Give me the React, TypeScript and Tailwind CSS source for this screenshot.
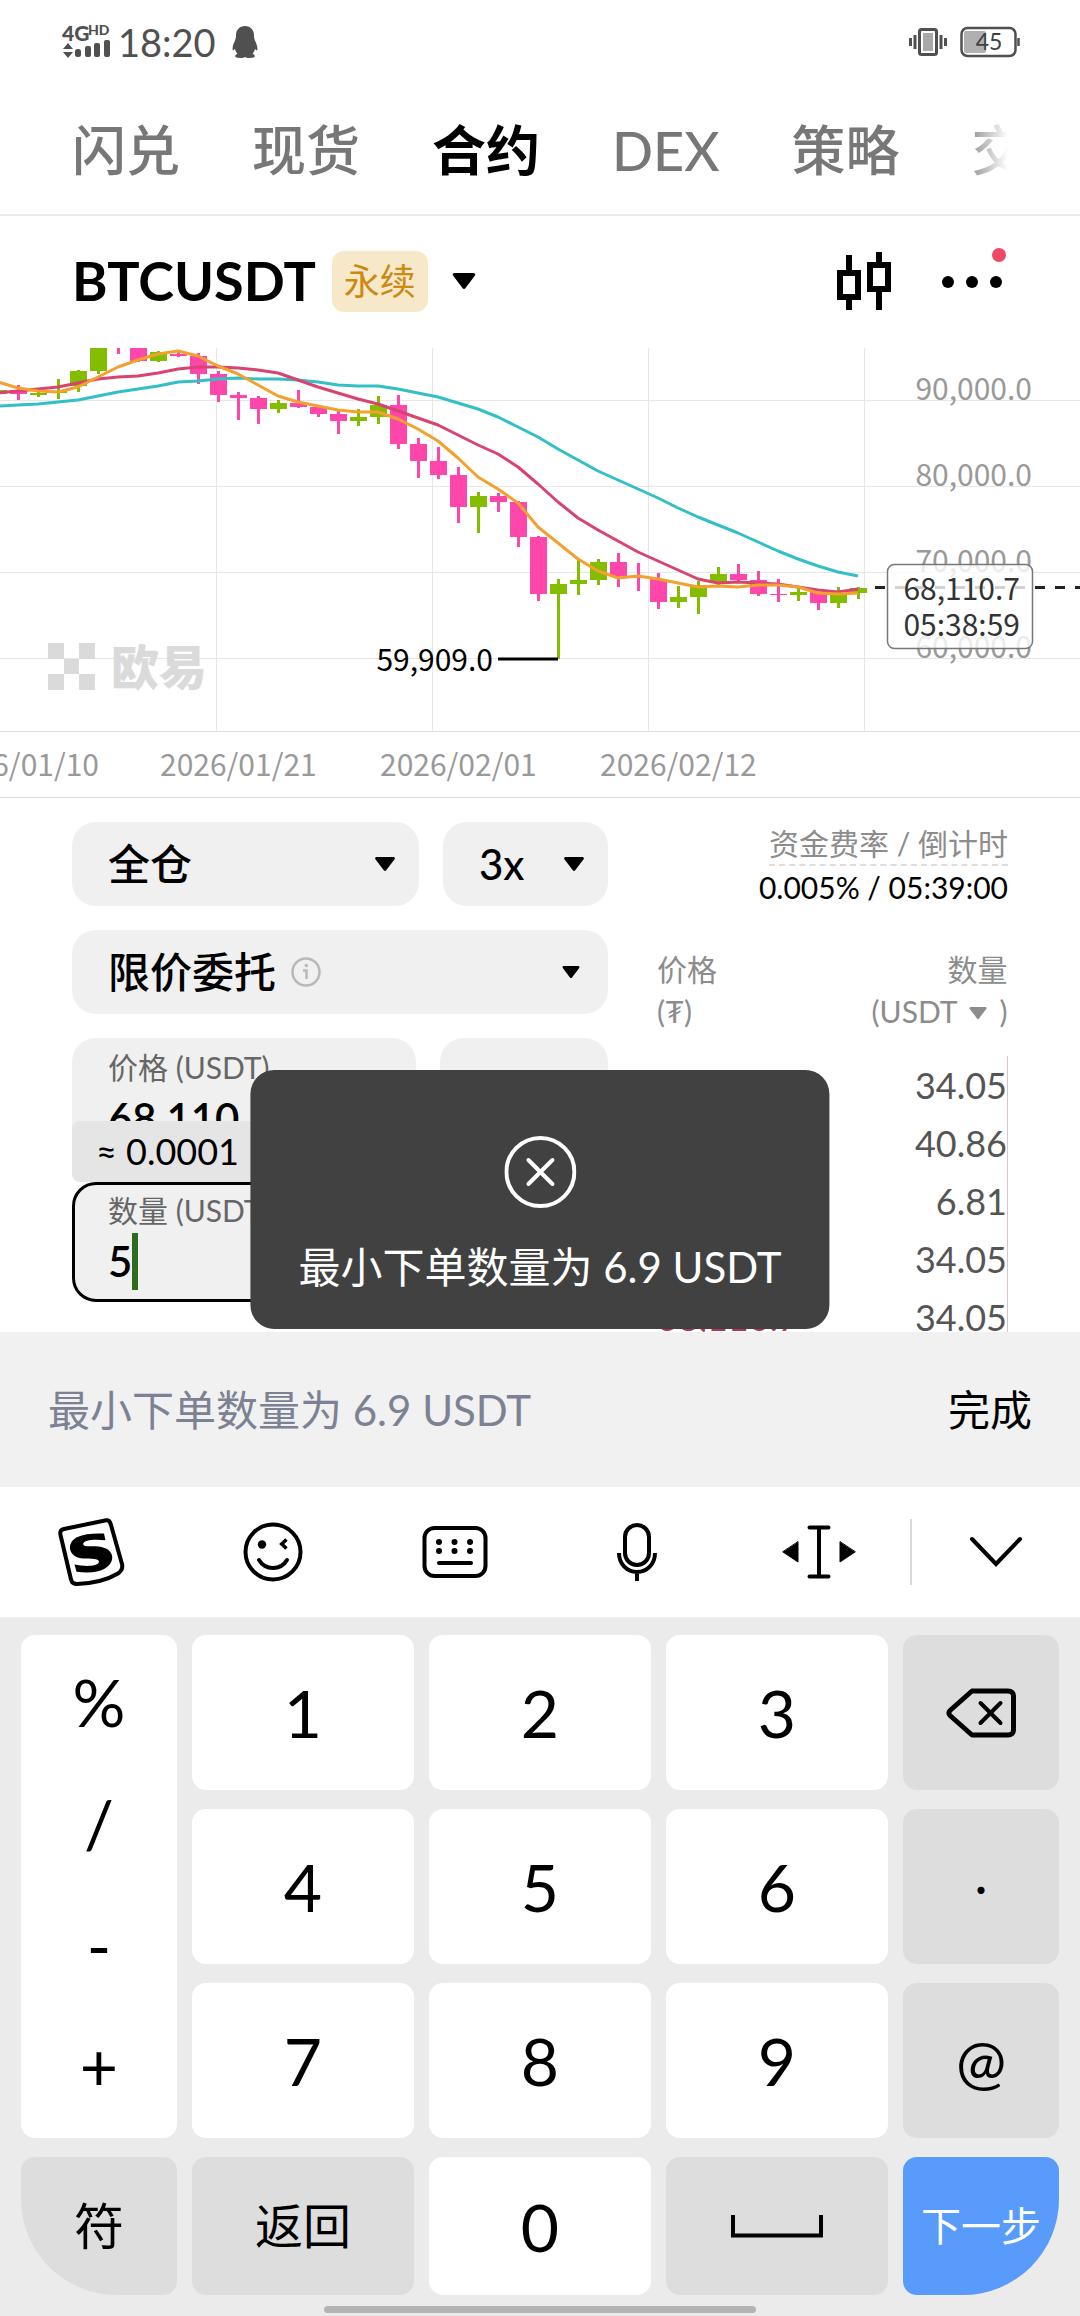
import { useState } from "react";
import type { ReactNode } from "react";

type Candle = [up: boolean, top: number, bottom: number, high: number, low: number];

// one entry per day, 20 units apart, the first one is cut by the left edge
const candles: Candle[] = [
    [true, 42, 46, 42, 46],
    [false, 42, 46, 37, 52],
    [true, 45, 47, 43, 49],
    [true, 43, 45, 31, 51],
    [true, 23, 38, 22, 44],
    [true, 0, 23, 0, 26],
    [false, 0, 0, 0, 6],
    [false, 0, 13, 0, 14],
    [true, 4, 13, 3, 14],
    [false, 6, 8, 4, 9],
    [false, 8, 26, 5, 36],
    [false, 26, 47, 23, 54],
    [false, 47, 50, 44, 72],
    [false, 50, 61, 48, 76],
    [true, 55, 61, 52, 65],
    [false, 55, 59, 42, 60],
    [false, 59, 66, 59, 69],
    [false, 66, 73, 63, 86],
    [true, 69, 73, 61, 78],
    [true, 57, 69, 48, 76],
    [false, 57, 96, 47, 101],
    [false, 96, 113, 90, 130],
    [false, 113, 127, 99, 131],
    [false, 127, 159, 119, 175],
    [true, 148, 159, 144, 185],
    [false, 148, 154, 145, 164],
    [false, 154, 189, 153, 199],
    [false, 189, 246, 188, 253],
    [true, 236, 246, 231, 311],
    [true, 232, 236, 212, 247],
    [true, 214, 232, 211, 237],
    [false, 214, 228, 205, 239],
    [false, 229, 230, 215, 243],
    [false, 231, 254, 225, 261],
    [true, 249, 254, 238, 260],
    [true, 237, 249, 233, 266],
    [true, 226, 235, 219, 237],
    [false, 226, 232, 216, 234],
    [false, 232, 246, 223, 248],
    [false, 246, 247, 231, 254],
    [true, 244, 247, 239, 253],
    [false, 244, 255, 244, 262],
    [true, 247, 255, 239, 260],
    [true, 240, 245, 239, 251],
];

const averages = [
    {
        color: "#33bfc6",
        values: [
            58, 57, 56, 54, 52, 48, 44, 41, 38, 34, 33, 31, 30, 31, 31, 32, 34, 37, 38, 38, 41, 45, 49, 55, 61, 69, 79,
            89, 101, 112, 123, 132, 141, 150, 160, 169, 177, 185, 194, 203, 211, 218, 224, 228,
        ],
    },
    {
        color: "#d8436f",
        values: [
            45, 43, 41, 39, 35, 31, 29, 28, 25, 21, 19, 19, 20, 22, 25, 32, 39, 45, 51, 56, 63, 70, 77, 87, 97, 106,
            119, 136, 154, 170, 182, 193, 204, 213, 222, 231, 235, 234, 235, 236, 239, 242, 244, 241,
        ],
    },
    {
        color: "#f2a12e",
        values: [
            34, 40, 43, 44, 39, 29, 19, 12, 6, 3, 8, 18, 26, 37, 48, 54, 58, 62, 64, 64, 71, 81, 93, 110, 129, 141,
            155, 179, 195, 211, 223, 230, 228, 231, 235, 239, 238, 239, 237, 237, 239, 245, 246, 245,
        ],
    },
];

const candleX = (i: number) => i * 20 - 2;

const tabs = ["闪兑", "现货", "合约", "DEX", "策略", "交易"];

const book = [
    { price: "", amount: "34.05" },
    { price: "", amount: "40.86" },
    { price: "", amount: "6.81" },
    { price: "", amount: "34.05" },
    { price: "68,110.7", amount: "34.05" },
];

function Caret({ className }: { className?: string }) {
    return (
        <svg viewBox="0 0 20 14" className={className} fill="currentColor" aria-hidden="true">
            <path d="M1.6 0h16.8c1.2 0 1.9 1.3 1.2 2.2l-8.4 11.1c-.6.9-1.8.9-2.4 0L.4 2.200C-.3 1.300.4 0 1.600 0z" />
        </svg>
    );
}

function StatusBar() {
    return (
        <header className="flex h-[84px] items-center justify-between px-[60px] text-[#505050]">
            <div className="flex items-center">
                <svg className="overflow-visible" width="50" height="36" viewBox="0 0 50 36" fill="currentColor" aria-hidden="true">
                    <text x="2" y="17" fontSize="21" fontWeight="900">4G</text>
                    <text x="28" y="11" fontSize="14" fontWeight="900">HD</text>
                    <path d="M3 25l5-6 5 6zM3 28h10l-5 6z" />
                    <rect x="15" y="25" width="6" height="8" rx="2.500" />
                    <rect x="25" y="22" width="6" height="11" rx="2" />
                    <rect x="34" y="19" width="6" height="14" rx="2" />
                    <rect x="44" y="16" width="6" height="17" rx="2" />
                </svg>
                <span className="ml-2 text-[38px] leading-[40px]">18:20</span>
                <svg className="ml-4" width="26" height="32" viewBox="0 0 26 32" fill="currentColor" aria-label="QQ">
                    <path d="M13 0c5.500 0 9 4 9 9 0 2 .2 3.500 1 5.500 1.500 3.200 2.600 6 2.400 8.800-.1 1.700-1.100 1.400-2.400-.6-.4 2.200-1.200 3.700-2.500 5 1.500.7 2.300 1.300 2.300 2.400 0 1.400-2 1.900-5 1.900-2.200 0-3.800-.4-4.800-1.100-1 .7-2.600 1.100-4.800 1.100-3 0-5-.5-5-1.900 0-1.100.8-1.700 2.300-2.400C4.200 26.400 3.400 24.900 3 22.700c-1.300 2-2.300 2.300-2.400.6C.4 20.500 1.500 17.700 3 14.500 3.800 12.500 4 11 4 9c0-5 3.500-9 9-9z" />
                </svg>
            </div>
            <div className="flex items-center gap-3">
                <svg width="40" height="30" viewBox="0 0 40 30" aria-label="振动">
                    <rect x="11.500" y="2.500" width="17" height="25" rx="2" fill="#fff" stroke="#505050" strokeWidth="3" />
                    <rect x="15" y="6" width="10" height="18" fill="#a8a8a8" />
                    <path d="M2.500 11v8M7 8v14M33 8v14M37.500 11v8" stroke="#505050" strokeWidth="3" />
                </svg>
                <svg width="60" height="32" viewBox="0 0 60 32" aria-label="电量">
                    <rect x="1.500" y="2" width="54" height="28" rx="6" fill="#fff" stroke="#505050" strokeWidth="2.500" />
                    <rect x="4" y="5" width="22" height="22" rx="2" fill="#b0b0b0" />
                    <path d="M58.500 12v8" stroke="#505050" strokeWidth="2.500" />
                    <text x="29" y="24" fontSize="23" textAnchor="middle" fill="#404040">45</text>
                </svg>
            </div>
        </header>
    );
}

function Chart() {
    return (
        <svg
            viewBox="0 0 1080 450"
            className="block h-auto w-full"
            fontFamily="'Noto Sans CJK SC', sans-serif"
            fontSize="30"
            role="img"
            aria-label="BTCUSDT"
        >
            <g stroke="#e7e7e7" strokeWidth="1">
                {[52.5, 138.5, 224.5, 310.5].map((y) => (
                    <line key={y} x1="0" x2="1080" y1={y} y2={y} />
                ))}
                {[216.5, 432.5, 648.5, 864.5].map((x) => (
                    <line key={x} x1={x} x2={x} y1="0" y2="383" />
                ))}
                <line x1="0" x2="1080" y1="383.5" y2="383.5" stroke="#dedede" />
                <line x1="0" x2="1080" y1="449.5" y2="449.5" stroke="#dedede" />
            </g>

            {/* Watermark */}
            <g fill="#dadada">
                <path d="M48 295h16v16H48zM79 295h16v16H79zM64 311h15v15H64zM48 326h16v16H48zM79 326h16v16H79z" />
                <text x="111" y="337" fontSize="48" fontWeight="900">欧易</text>
            </g>

            {candles.map(([up, top, bottom, high, low], i) => (
                <g key={i} fill={up ? "#84bd00" : "#ff47ab"}>
                    <rect x={candleX(i) - 1} y={high} width="3" height={low - high} />
                    <rect x={candleX(i) - 8} y={top} width="17" height={bottom - top} />
                </g>
            ))}
            {averages.map((line) => (
                <polyline
                    key={line.color}
                    points={line.values.map((y, i) => `${candleX(i)},${y}`).join(" ")}
                    fill="none"
                    stroke={line.color}
                    strokeWidth="3"
                    strokeLinejoin="round"
                />
            ))}

            <line x1="498" x2="558" y1="311" y2="311" stroke="#000" strokeWidth="3" />
            <text x="493" y="323" textAnchor="end">59,909.0</text>

            <g fill="#999" textAnchor="end">
                <text x="1032" y="52">90,000.0</text>
                <text x="1032" y="138">80,000.0</text>
                <text x="1032" y="224">70,000.0</text>
                <text x="1032" y="310">60,000.0</text>
            </g>
            <line x1="875" x2="1080" y1="239.5" y2="239.5" stroke="#222" strokeWidth="3" strokeDasharray="10 10" />
            <rect x="887.500" y="216.500" width="145" height="84" rx="7" fill="#fff" fillOpacity="0.8" stroke="#777" strokeWidth="1.500" />
            <g fill="#333" textAnchor="end">
                <text x="1020" y="252">68,110.7</text>
                <text x="1020" y="288">05:38:59</text>
            </g>

            <g fill="#999">
                <text x="99" y="428" textAnchor="end">2026/01/10</text>
                <text x="160" y="428">2026/01/21</text>
                <text x="380" y="428">2026/02/01</text>
                <text x="600" y="428">2026/02/12</text>
            </g>
        </svg>
    );
}

function OrderForm() {
    const [price, setPrice] = useState("68,110");
    const [amount, setAmount] = useState("5");

    return (
        <div className="flex w-[536px] flex-col gap-6">
            <div className="flex gap-6">
                <div className="flex h-[84px] flex-1 items-center justify-between rounded-3xl bg-[#f0f0f0] pr-6 pl-9">
                    <select aria-label="保证金模式" className="appearance-none bg-transparent text-[42px] leading-[60px] font-medium outline-none">
                        <option>全仓</option>
                    </select>
                    <Caret className="h-[14px] w-5" />
                </div>
                <div className="flex h-[84px] w-[165px] items-center justify-between rounded-3xl bg-[#f0f0f0] pr-6 pl-9">
                    <select aria-label="杠杆" className="appearance-none bg-transparent text-[42px] leading-[60px] font-medium outline-none">
                        <option>3x</option>
                    </select>
                    <Caret className="h-[14px] w-5" />
                </div>
            </div>

            <div className="flex h-[84px] items-center rounded-3xl bg-[#f0f0f0] pr-7 pl-9">
                <select aria-label="委托类型" className="appearance-none bg-transparent text-[42px] leading-[60px] font-medium outline-none">
                    <option>限价委托</option>
                </select>
                <svg className="ml-[14px]" width="30" height="30" viewBox="0 0 30 30" fill="none" stroke="#b8b8b8" strokeWidth="2.500" aria-hidden="true">
                    <circle cx="15" cy="15" r="13.500" />
                    <path d="M12 13.500h3.500V22" />
                    <circle cx="15.300" cy="8.500" r="1.700" fill="#b8b8b8" stroke="none" />
                </svg>
                <Caret className="ml-auto h-3 w-[18px]" />
            </div>

            <div className="flex gap-6">
                <label className="flex h-[120px] flex-1 flex-col rounded-3xl bg-[#f0f0f0] px-9 pt-2">
                    <span className="text-[30px] leading-[42px] text-[#666]">价格 (USDT)</span>
                    <input
                        value={price}
                        onChange={(e) => setPrice(e.target.value)}
                        className="w-full bg-transparent text-[42px] leading-[60px] font-semibold outline-none"
                    />
                </label>
                <div className="w-[168px] rounded-3xl bg-[#f0f0f0]" />
            </div>

            <div className="relative">
                {/* Estimated amount, floats over the price field */}
                <div className="absolute bottom-full left-0 w-full rounded-lg bg-[#e5e5e5] px-6 text-[36px] leading-[61px]">
                    ≈ 0.0001
                </div>
                <label className="flex h-[120px] flex-col rounded-3xl border-3 border-black bg-[#f0f0f0] px-[33px] pt-1">
                    <span className="text-[30px] leading-[42px] text-[#666]">数量 (USDT)</span>
                    <span className="flex items-center">
                        <input
                            value={amount}
                            onChange={(e) => setAmount(e.target.value)}
                            className="w-6 bg-transparent text-[42px] leading-[60px] font-semibold outline-none"
                        />
                        <span className="h-[57px] w-[6px] bg-[#2e6b1e]" />
                    </span>
                </label>
            </div>
        </div>
    );
}

function OrderBook() {
    return (
        <div className="h-0 min-h-full w-[351px]">
            <div className="flex flex-col items-end leading-[42px]">
                <span className="border-b-2 border-dashed border-[#ddd] text-[30px] text-[#8c8c8c]">资金费率 / 倒计时</span>
                <span className="text-[30px]">0.005% / 05:39:00</span>
            </div>
            <table className="mt-10 w-full">
                <thead>
                    <tr className="text-[30px] leading-[42px] text-[#8c8c8c]">
                        <th className="pb-6 text-left font-normal">
                            价格
                            <br />
                            (₮)
                        </th>
                        <th className="pb-6 text-right font-normal">
                            数量
                            <br />
                            (USDT
                            <Caret className="mx-3 mb-1 inline-block h-3 w-[18px] align-middle" />)
                        </th>
                    </tr>
                </thead>
                <tbody className="border-r border-[#dcc3cb] text-[36px] leading-[58px]">
                    {book.map((row, i) => (
                        <tr key={i}>
                            <td className="text-[#a8385f]">{row.price}</td>
                            <td className="text-right text-[#555]">{row.amount}</td>
                        </tr>
                    ))}
                </tbody>
            </table>
        </div>
    );
}

function ToolButton({ label, children }: { label: string; children: ReactNode }) {
    return (
        <button aria-label={label} className="flex flex-1 items-center justify-center">
            {children}
        </button>
    );
}

function Key({ children, gray, className = "text-[66px]" }: { children: ReactNode; gray?: boolean; className?: string }) {
    return (
        <button className={`flex items-center justify-center rounded-[14px] ${gray ? "bg-[#dddddd]" : "bg-white"} ${className}`}>
            {children}
        </button>
    );
}

function Keyboard() {
    return (
        <section>
            {/* Toolbar */}
            <div className="flex h-[130px] bg-white">
                <ToolButton label="搜狗输入法">
                    <svg width="68" height="68" viewBox="0 0 68 68" fill="none" stroke="#000" strokeWidth="4">
                        <path d="M7 11L48 2.500c3-.6 5 .8 5.700 3.500L65 46c1 4-.5 7-4 9.500C50 62 34 65.500 20 66c-3 0-5.300-1.500-6-4.500L3.500 17C2.800 13.500 4 11.600 7 11z" strokeLinejoin="round" />
                        <path d="M47 15.500C36 15 27 16 20.500 19 9 24.500 11 38 24 40.200c8 1.300 15-.4 17.500 2.300 1.800 2.600-2 4.800-7.500 5.300-5.500.5-11-.2-16.500-1.300l2 7.300c12 1.700 22 .6 28.500-3.300C60 43 56.500 30.500 43 28.700c-8-1-14.500.6-16.500-1.700-1.200-2.300 2-4.400 7.500-5 5-.5 9.500-.4 14.500.2z" fill="#000" stroke="none" />
                    </svg>
                </ToolButton>
                <ToolButton label="表情">
                    <svg width="62" height="62" viewBox="0 0 62 62" fill="none" stroke="#000" strokeWidth="4">
                        <circle cx="31" cy="31" r="27.500" />
                        <circle cx="20" cy="23.500" r="4.200" fill="#000" stroke="none" />
                        <path d="M44.500 18.500l-4.800 4.500 4.800 4.500" strokeWidth="3.500" />
                        <path d="M17 39c3 5 8 8 14 8s11-3 14-8" strokeLinecap="round" />
                    </svg>
                </ToolButton>
                <ToolButton label="键盘">
                    <svg width="66" height="54" viewBox="0 0 66 54" fill="none" stroke="#000" strokeWidth="4" strokeLinecap="round">
                        <rect x="2.500" y="3" width="61" height="48" rx="10" />
                        <path d="M17 38h32" />
                        <path d="M17 17h.01M32.500 17h.01M48 17h.01M17 26h.01M32.500 26h.01M48 26h.01" strokeWidth="6" />
                    </svg>
                </ToolButton>
                <ToolButton label="语音">
                    <svg width="42" height="60" viewBox="0 0 42 60" fill="none" stroke="#000" strokeWidth="4">
                        <rect x="9" y="3" width="24" height="40" rx="12" />
                        <path d="M3 31c0 11 8 19 18 19s18-8 18-19M21 50v9" />
                    </svg>
                </ToolButton>
                <ToolButton label="移动光标">
                    <svg width="76" height="54" viewBox="0 0 76 54" fill="none" stroke="#000" strokeWidth="4" strokeLinecap="round">
                        <path d="M28.500 2.500h19M28.500 51.500h19M38 2.500v49" />
                        <path d="M17 17v20L2 27zM59 17v20l15-10z" fill="#000" strokeWidth="1" strokeLinejoin="round" />
                    </svg>
                </ToolButton>
                <div className="my-8 w-[2px] bg-[#d8d8d8]" />
                <button aria-label="收起键盘" className="flex w-[168px] items-center justify-center">
                    <svg width="54" height="32" viewBox="0 0 54 32" fill="none" stroke="#000" strokeWidth="4" strokeLinecap="round">
                        <path d="M3 3l24 25L51 3" />
                    </svg>
                </button>
            </div>

            {/* Keys */}
            <div className="bg-[#ebebeb] px-[21px] pt-[18px] pb-[3px]">
                <div className="grid grid-cols-[156fr_222fr_222fr_222fr_156fr] grid-rows-[155px_155px_155px_138px] gap-x-[15px] gap-y-[19px]">
                    <div className="row-span-3 flex flex-col rounded-[14px] bg-white pt-[6px] pb-3 text-[66px]">
                        <button className="flex-1">%</button>
                        <button className="flex-1">/</button>
                        <button className="flex-1">-</button>
                        <button className="flex-1">+</button>
                    </div>
                    <Key>1</Key>
                    <Key>2</Key>
                    <Key>3</Key>
                    <Key gray>
                        <svg width="70" height="50" viewBox="0 0 70 50" fill="none" stroke="#000" strokeWidth="5" strokeLinecap="round" strokeLinejoin="round" aria-label="删除">
                            <path d="M26 3h36c3.500 0 5.500 2 5.500 5v34c0 3-2 5-5.500 5H26L4 27.500c-1.500-1.500-1.500-3.500 0-5z" />
                            <path d="M34.500 15l20 20M54.500 15l-20 20" strokeWidth="4" />
                        </svg>
                    </Key>
                    <Key>4</Key>
                    <Key>5</Key>
                    <Key>6</Key>
                    <Key gray className="text-[48px]">·</Key>
                    <Key>7</Key>
                    <Key>8</Key>
                    <Key>9</Key>
                    <Key gray className="text-[60px]">@</Key>
                    <Key gray className="rounded-bl-[96px] text-[50px]">符</Key>
                    <Key gray className="text-[48px]">返回</Key>
                    <Key>0</Key>
                    <Key gray>
                        <svg width="92" height="24" viewBox="0 0 92 24" fill="none" stroke="#000" strokeWidth="4" aria-label="空格">
                            <path d="M2 1v20.500h88V1" />
                        </svg>
                    </Key>
                    <button className="rounded-[14px] rounded-br-[96px] bg-[#589bfa] text-[40px] text-white">下一步</button>
                </div>
                <div className="mx-auto mt-[11px] h-[7px] w-[432px] rounded-full bg-[#b3b3b3]" />
            </div>
        </section>
    );
}

export default function App() {
    return (
        <div className="min-h-screen bg-white font-['Lato','Noto_Sans_CJK_SC',sans-serif] text-black">
            <StatusBar />

            {/* Tabs */}
            <div className="border-b-2 border-[#ebebeb] px-[72px]">
                <nav className="flex h-[130px] items-center gap-[72px] overflow-hidden pt-1 [mask-image:linear-gradient(to_right,#000_calc(100%-48px),transparent)]">
                    {tabs.map((tab) => (
                        <a
                            key={tab}
                            href="#"
                            className={`shrink-0 text-[54px] leading-[72px] ${tab === "合约" ? "font-bold text-black" : "font-medium text-[#777]"}`}
                        >
                            {tab}
                        </a>
                    ))}
                </nav>
            </div>

            {/* Instrument */}
            <div className="flex h-[132px] items-center px-[72px] pb-[2px]">
                <h1 className="text-[54px] leading-[72px] font-bold">BTCUSDT</h1>
                <span className="ml-4 rounded-xl bg-[#f7e8ca] px-3 text-[36px] leading-[61px] text-[#cb8a12]">永续</span>
                <button aria-label="切换合约" className="ml-6">
                    <Caret className="h-4 w-6" />
                </button>
                <button aria-label="K线" className="ml-auto">
                    <svg width="56" height="58" viewBox="0 0 56 58" fill="none" stroke="#000" strokeWidth="6">
                        <path d="M13 3v16M13 47v11M43 0v14M43 38v20" />
                        <rect x="4" y="21" width="18" height="24" />
                        <rect x="34" y="13" width="18" height="24" />
                    </svg>
                </button>
                <button aria-label="更多" className="ml-11">
                    <svg className="overflow-visible" width="72" height="58" viewBox="0 0 72 58">
                        <circle cx="12" cy="30" r="6" />
                        <circle cx="36" cy="30" r="6" />
                        <circle cx="60" cy="30" r="6" />
                        <circle cx="63" cy="3" r="7" fill="#f04868" />
                    </svg>
                </button>
            </div>

            <Chart />

            {/* Order form and book */}
            <main className="relative flex justify-between overflow-hidden px-[72px] pt-6 pb-[30px]">
                <OrderForm />
                <OrderBook />

                <div
                    role="alert"
                    className="absolute bottom-[3px] left-1/2 flex -translate-x-1/2 flex-col items-center gap-[29px] rounded-3xl bg-[#414141] px-12 pt-[66px] pb-8 text-white"
                >
                    <svg width="72" height="72" viewBox="0 0 72 72" fill="none" stroke="currentColor" strokeWidth="4" strokeLinecap="round">
                        <circle cx="36" cy="36" r="34" />
                        <path d="M24 24l24 24M48 24L24 48" />
                    </svg>
                    <p className="text-[42px] leading-[60px] whitespace-nowrap">最小下单数量为 6.9 USDT</p>
                </div>
            </main>

            <div className="flex h-[155px] items-center justify-between bg-[#f1f1f1] px-12 text-[42px] leading-[60px]">
                <span className="text-[#7c8293]">最小下单数量为 6.9 USDT</span>
                <button>完成</button>
            </div>

            <Keyboard />
        </div>
    );
}
